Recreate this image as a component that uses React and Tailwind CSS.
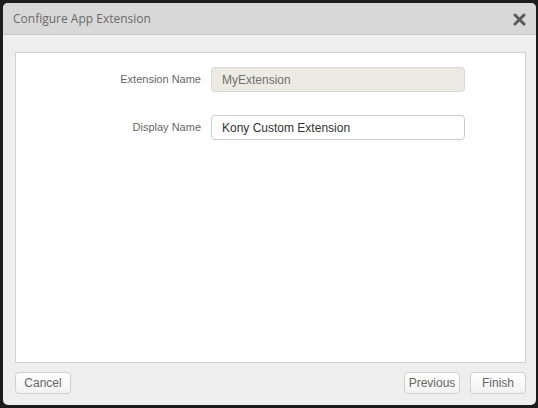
import React from "react";

// Modal for configuring an app extension: name fields in a white panel,
// wizard navigation buttons along the bottom.
function Field({ label, value, disabled }) {
  return (
    <div className="flex items-center">
      <label className="w-[195px] pr-[10px] text-right text-[11px] text-[#666]">
        {label}
      </label>
      <div
        className={
          disabled
            ? "flex h-[25px] w-[254px] items-center rounded-[4px] border border-[#d8d8d2] bg-[#ebebe4] pl-[10px] text-[12px] text-[#707070]"
            : "flex h-[25px] w-[254px] items-center rounded-[4px] border border-[#cccccc] bg-white pl-[10px] text-[12px] text-[#333]"
        }
      >
        {value}
      </div>
    </div>
  );
}

function Button({ children, className = "" }) {
  return (
    <button
      className={
        "h-[22px] rounded-[4px] border border-[#cfcfcf] bg-gradient-to-b from-white to-[#f2f2f2] text-[12px] text-[#666] " +
        className
      }
    >
      {children}
    </button>
  );
}

export default function App() {
  return (
    <div
      className="h-[408px] w-[538px] bg-[#1c1c1c] pl-[3px] pr-[2px] pt-[3px] pb-[3px]"
      style={{ fontFamily: '"Liberation Sans", Arial, sans-serif' }}
    >
      <div className="flex h-full flex-col overflow-hidden rounded-[5px] bg-[#eeeeee]">
        <div className="flex h-[32px] shrink-0 items-center justify-between border-b border-[#c6c6c6] bg-[#d8d8d8] pl-[10px] pr-[10px]">
          <span
            className="text-[12px] text-[#6a6a6a]"
            style={{ fontFamily: '"Open Sans", sans-serif' }}
          >
            Configure App Extension
          </span>
          <svg width="13" height="13" viewBox="0 0 13 13" className="mt-[1px]">
            <path
              d="M2 2 L11 11 M11 2 L2 11"
              stroke="#5a5a5a"
              strokeWidth="3"
              strokeLinecap="round"
            />
          </svg>
        </div>

        <div className="flex flex-1 flex-col pl-[12px] pr-[10px] pt-[17px] pb-[11px]">
          <div className="flex flex-1 flex-col gap-[23px] border border-[#d0d0d0] bg-white pt-[14px]">
            <Field label="Extension Name" value="MyExtension" disabled />
            <Field label="Display Name" value="Kony Custom Extension" />
          </div>

          <div className="mt-[9px] flex items-center justify-between">
            <Button className="w-[56px]">Cancel</Button>
            <div className="flex gap-[10px]">
              <Button className="w-[56px]">Previous</Button>
              <Button className="w-[56px]">Finish</Button>
            </div>
          </div>
        </div>
      </div>
    </div>
  );
}
